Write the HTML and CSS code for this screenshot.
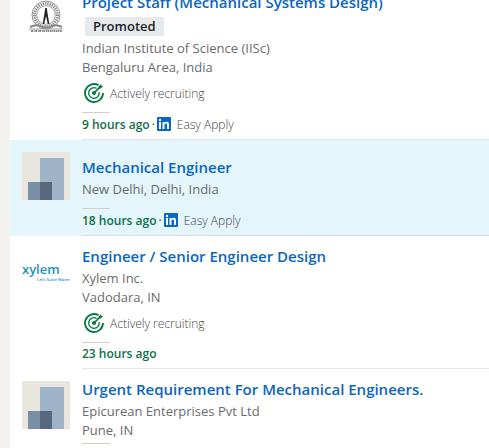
FILE: index.html
```html
<!DOCTYPE html>
<html lang="en">
<head>
<meta charset="utf-8">
<meta name="viewport" content="width=device-width, initial-scale=1">
<title>Jobs</title>
<link rel="stylesheet" href="styles.css">
</head>
<body>
<svg class="defs" aria-hidden="true">
  <symbol id="ghost" viewBox="0 0 48 48">
    <path fill="#e9e5df" d="M0 0h48v48H0z"/>
    <path fill="#a0b4c9" d="M18 6h24v42H18z"/>
    <path fill="#788fa6" d="M6 30h12v18H6z"/>
    <path fill="#56687a" d="M18 30h12v18H18z"/>
  </symbol>
  <symbol id="target" viewBox="0 0 20 20">
    <g fill="none" stroke="#057642">
      <path stroke-width="1.800" d="M14.600 2.300A9 9 0 1 0 19 10"/>
      <path stroke-width="1.300" d="M12.600 5.400A5.300 5.300 0 1 0 15.200 9.200"/>
      <path stroke-width="1.700" d="M10 10l7-7"/>
    </g>
    <circle cx="10" cy="10" r="2" fill="#057642"/>
    <path fill="#057642" d="M14.700 3.600L17 1.300l.4 1.500 1.700.4-2.400 2.300-1.900.2z"/>
  </symbol>
  <symbol id="in" viewBox="0 0 14 14">
    <rect width="14" height="14" rx="1" fill="#0a66c2"/>
    <path fill="#fff" d="M2 5h2v7H2zM5.500 5h2v1c.4-.7 1.100-1.200 2.100-1.200 1.900 0 2.400 1.200 2.400 3V12h-2V8.200c0-1-.2-1.700-1.100-1.700S7.500 7.200 7.500 8.200V12h-2z"/>
    <circle cx="3" cy="3" r="1.200" fill="#fff"/>
  </symbol>
</svg>
<main class="panel">
  <ul class="jobs">
    <li class="job">
      <svg class="logo" viewBox="0 0 48 48" role="img" aria-label="Indian Institute of Science">
        <g fill="none" stroke="#777">
          <circle cx="24" cy="21" r="14" stroke-width=".8"/>
          <circle cx="24" cy="21" r="11.500" stroke="#888" stroke-width="3" stroke-dasharray="1.300 1"/>
          <circle cx="24" cy="21" r="9.300" stroke-width=".7"/>
          <path stroke="#888" stroke-width="2" d="M8 33c4-2 8-2 10-1 3 2 9 2 12 0 2-1 6-1 10 1"/>
          <path stroke="#666" stroke-width="1.500" stroke-dasharray="2 .6 1 .5" d="M9 37h31"/>
          <path stroke="#999" stroke-width="1" d="M7 35h34"/>
        </g>
        <path fill="#222" d="M23.200 14h1.600l.7 5 1.800 11h-1.500L24 22l-1.800 8h-1.500l1.800-11z"/>
      </svg>
      <div class="content">
        <div class="details">
          <h2 class="title"><a href="#">Project Staff (Mechanical Systems Design)</a></h2>
          <div class="promo"><span class="badge">Promoted</span></div>
          <p class="meta">Indian Institute of Science (IISc)</p>
          <p class="meta">Bengaluru Area, India</p>
          <p class="recruiting"><svg class="target" aria-hidden="true"><use href="#target"/></svg>Actively recruiting</p>
        </div>
        <div class="foot easy"><time>9 hours ago</time><span class="dot">·</span><svg class="in" aria-hidden="true"><use href="#in"/></svg><span class="apply">Easy Apply</span></div>
      </div>
    </li>
    <li class="job selected">
      <svg class="logo" aria-hidden="true"><use href="#ghost"/></svg>
      <div class="content">
        <div class="details">
          <h2 class="title"><a href="#">Mechanical Engineer</a></h2>
          <p class="meta">New Delhi, Delhi, India</p>
        </div>
        <div class="foot easy"><time>18 hours ago</time><span class="dot">·</span><svg class="in" aria-hidden="true"><use href="#in"/></svg><span class="apply">Easy Apply</span></div>
      </div>
    </li>
    <li class="job">
      <svg class="logo" viewBox="0 0 48 48" role="img" aria-label="Xylem">
        <text class="xylem" x="0" y="26">xylem</text>
        <text class="slogan" x="15" y="33">Let’s Solve Water</text>
      </svg>
      <div class="content">
        <div class="details">
          <h2 class="title"><a href="#">Engineer / Senior Engineer Design</a></h2>
          <p class="meta">Xylem Inc.</p>
          <p class="meta">Vadodara, IN</p>
          <p class="recruiting"><svg class="target" aria-hidden="true"><use href="#target"/></svg>Actively recruiting</p>
        </div>
        <div class="foot"><time>23 hours ago</time></div>
      </div>
    </li>
    <li class="job">
      <svg class="logo" aria-hidden="true"><use href="#ghost"/></svg>
      <div class="content">
        <div class="details">
          <h2 class="title"><a href="#">Urgent Requirement For Mechanical Engineers.</a></h2>
          <p class="meta">Epicurean Enterprises Pvt Ltd</p>
          <p class="meta">Pune, IN</p>
        </div>
        <div class="foot"></div>
      </div>
    </li>
  </ul>
</main>
</body>
</html>
```

FILE: styles.css
```css
* {
  box-sizing: border-box;
}

html {
  height: 100%;
  overflow: hidden;
}

body {
  height: 100%;
  margin: 0;
  padding-left: 10px;
  overflow: hidden;
  background: #f3f2ef;
  font-family: "Open Sans", "Noto Sans", sans-serif;
  color: #444;
}

.defs {
  position: absolute;
  width: 0;
  height: 0;
}

.panel {
  min-height: 100%;
  background: #fff;
}

/* The list is scrolled a little past its first card. */
.jobs {
  margin: -18px 0 0;
  padding: 0;
  list-style: none;
}

.job {
  display: flex;
  gap: 12px;
  padding-left: 12px;
}

.selected {
  background: #e4f5fc;
}

.logo {
  flex: none;
  width: 48px;
  height: 48px;
  margin-top: 12px;
}

.xylem {
  font: 600 13px "Open Sans", sans-serif;
  fill: #1b94b8;
}

.slogan {
  font: 600 4px "Open Sans", sans-serif;
  fill: #1b94b8;
}

.content {
  flex: 1;
  min-width: 0;
  padding-top: 10px;
  border-bottom: 1px solid #e5e5e5;
}

.selected .content {
  border-color: #d0dfe5;
}

.details {
  display: flex;
  flex-direction: column;
  justify-content: center;
  min-height: 55px;
}

.title {
  margin: 0 0 3px;
  font-size: 15px;
  font-weight: 600;
  line-height: 20px;
  white-space: nowrap;
}

.title a {
  color: #0a66c2;
  text-decoration: none;
}

.promo {
  display: flex;
  padding: 2px 3px 3px;
}

.badge {
  padding: 0 8px;
  border-radius: 2px;
  background: #e7eaed;
  color: #1d1d1d;
  font-size: 13px;
  font-weight: 600;
  line-height: 19px;
}

.meta {
  margin: 0;
  color: #6b6b6b;
  font-size: 13px;
  line-height: 19px;
}

.recruiting {
  display: flex;
  align-items: center;
  gap: 6px;
  height: 32px;
  margin: 0;
  padding-left: 2px;
  font-size: 12px;
  font-weight: 300;
}

.target {
  width: 20px;
  height: 20px;
}

.foot {
  display: flex;
  align-items: center;
  height: 26px;
  margin-top: 3px;
  padding-bottom: 3px;
  font-size: 12px;
}

.foot::before {
  content: "";
  align-self: flex-start;
  width: 28px;
  height: 1px;
  margin-right: -28px;
  background: #d6cec2;
}

.easy {
  height: 27px;
}

.foot time {
  color: #0f7045;
  font-weight: 600;
}

.dot {
  margin: 0 2px;
}

.in {
  width: 14px;
  height: 14px;
  margin-right: 6px;
}

.apply {
  font-weight: 300;
}
```
